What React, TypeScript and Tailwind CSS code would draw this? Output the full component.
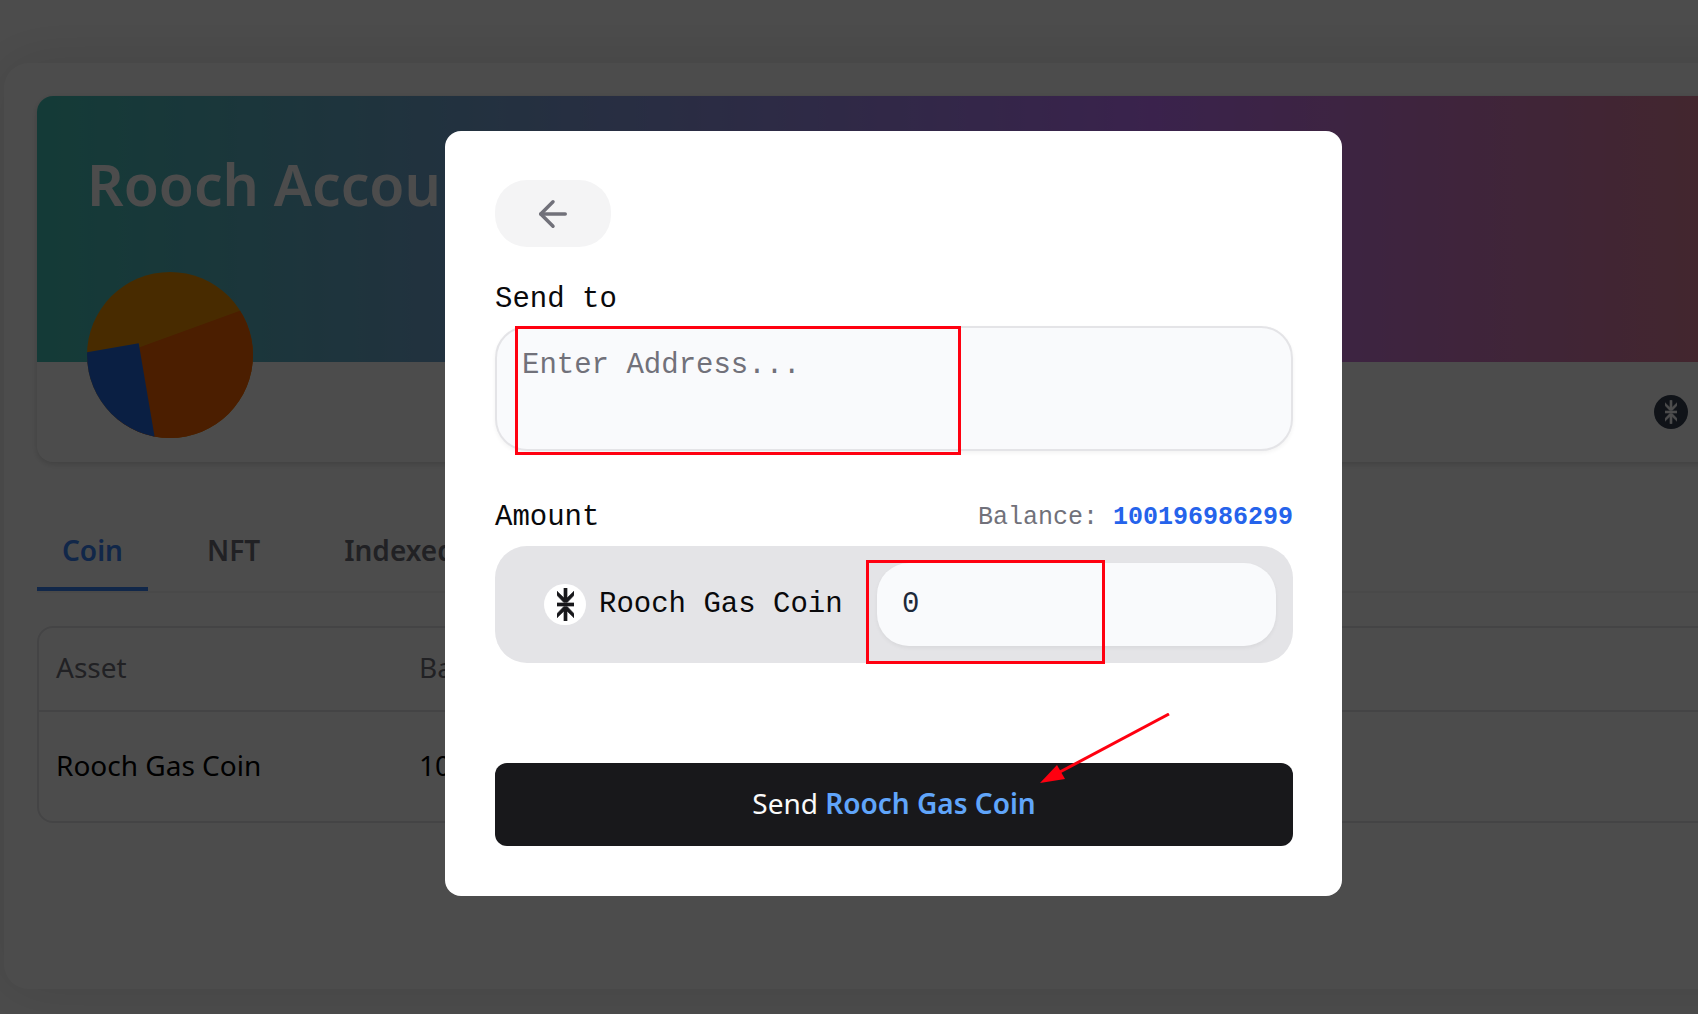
import React from "react";
import { ArrowLeft } from "lucide-react";

function CoinGlyph({ className }: { className: string }) {
  return (
    <svg viewBox="0 0 17 33" className={className} fill="currentColor" stroke="currentColor" strokeWidth="0.7" aria-hidden="true">
      <path d="M7 0h3v10l7-6.7v4L10.3 14.3H6.7L0 7.3v-4L7 10z" />
      <path d="M0 15h17v3H0z" />
      <path d="M7 33h3V23l7 6.7v-4L10.3 18.7H6.7L0 25.7v4L7 23z" />
    </svg>
  );
}

function Avatar() {
  return (
    <svg viewBox="0 0 166 166" className="size-[166px]" aria-hidden="true">
      <defs>
        <clipPath id="avatar-clip">
          <circle cx="83" cy="83" r="83" />
        </clipPath>
      </defs>
      <g clipPath="url(#avatar-clip)">
        <rect width="166" height="166" fill="#f19200" />
        <path d="M30 83.5 166 34v132H30z" fill="#fa6400" />
        <path d="M-5 81 51.7 71.3 68.5 170H-5z" fill="#236ae1" />
      </g>
    </svg>
  );
}

const tabs = ["Coin", "NFT", "Indexed"];

function AccountPage() {
  return (
    <main className="mt-[63px] ml-1 w-[135%] rounded-[25px] bg-white px-[33px] pt-[33px] pb-[166px] shadow-[0_0_60px_rgba(0,0,0,0.12)]">
      <section className="rounded-2xl bg-white shadow-[0_2px_6px_rgba(0,0,0,0.16)]">
        <div className="h-[266px] rounded-t-2xl bg-linear-to-r/srgb from-[#43c4b8] via-[#c274ff] to-[#fd8c35] px-[50px] pt-12">
          <h1 className="text-[57px] leading-[80px] font-semibold text-white">Rooch Account</h1>
        </div>
        <div className="flex h-[100px] items-start px-[50px]">
          <div className="-mt-[90px]">
            <Avatar />
          </div>
          <span className="mt-[33px] ml-[1401px] flex size-[34px] items-center justify-center rounded-full bg-gray-700 text-white">
            <CoinGlyph className="h-6 w-3" />
          </span>
        </div>
      </section>

      <nav className="mt-[58px] flex gap-[34px] border-b-2 border-gray-100" role="tablist">
        {tabs.map((tab, i) => (
          <button
            key={tab}
            role="tab"
            aria-selected={i === 0}
            className={
              i === 0
                ? "h-[71px] border-b-4 border-[#3b82f6] px-[25px] pb-2 text-[28px] leading-[40px] font-semibold text-[#3b82f6]"
                : "h-[71px] border-b-4 border-transparent px-[25px] pb-2 text-[28px] leading-[40px] font-semibold text-[#71717a]"
            }
          >
            {tab}
          </button>
        ))}
      </nav>

      <div className="mt-[33px] rounded-2xl border-2 border-zinc-200">
        <table className="w-full table-fixed text-left text-[28px] leading-[40px]">
          <thead>
            <tr className="h-[83px] border-b-2 border-zinc-200 text-[#71717a]">
              <th className="w-[363px] pb-1 pl-[17px] font-normal">Asset</th>
              <th className="pb-1 pl-[17px] font-normal">Balance</th>
            </tr>
          </thead>
          <tbody>
            <tr className="h-[110px] text-black">
              <td className="pb-1 pl-[17px]">Rooch Gas Coin</td>
              <td className="pb-1 pl-[17px]">100196986299</td>
            </tr>
          </tbody>
        </table>
      </div>
    </main>
  );
}

function SendDialog() {
  return (
    <div
      role="dialog"
      aria-modal="true"
      aria-label="Send coin"
      className="relative w-[897px] rounded-2xl bg-white py-[50px] pt-[49px] pr-[49px] pl-[50px] text-zinc-950"
    >
      <button
        aria-label="Back"
        className="flex h-[67px] w-[116px] items-center justify-center rounded-[32px] bg-[#f4f4f5] text-[#71717a]"
      >
        <ArrowLeft size={42} strokeWidth={2} />
      </button>

      <form className="mt-[33px] font-['Liberation_Mono',monospace] text-[29px] leading-[40px]" onSubmit={(e) => e.preventDefault()}>
        <label htmlFor="address" className="block">
          Send to
        </label>
        <div className="relative mt-[6px]">
          <textarea
            id="address"
            placeholder="Enter Address..."
            className="block h-[125px] w-full resize-none rounded-[32px] border-2 border-zinc-200 bg-[#f9fafc] px-[25px] py-[18px] shadow-[0_2px_4px_rgba(0,0,0,0.05)] outline-none placeholder:text-[#71717a]"
          />
          <div className="pointer-events-none absolute top-0 left-5 h-[129px] w-[446px] border-3 border-[#ff0010]" />
        </div>

        <div className="mt-[47px] flex items-center justify-between">
          <label htmlFor="amount">Amount</label>
          <p className="text-[25px] text-[#71717a]">
            Balance: <span className="font-bold text-[#2563eb]">100196986299</span>
          </p>
        </div>
        <div className="mt-2 flex h-[117px] items-center rounded-[32px] bg-zinc-200 pr-[17px] pl-[49px]">
          <span className="flex h-[41px] w-[42px] items-center justify-center rounded-full bg-white text-zinc-900">
            <CoinGlyph className="h-[33px] w-[17px]" />
          </span>
          <span className="ml-[13px] flex-1">Rooch Gas Coin</span>
          <div className="relative">
            <input
              id="amount"
              type="text"
              defaultValue="0"
              className="block h-[83px] w-[399px] rounded-[32px] bg-[#f9fafc] px-[25px] text-gray-800 shadow-[0_2px_4px_rgba(0,0,0,0.05)] outline-none"
            />
            <div className="pointer-events-none absolute -top-[3px] -left-[11px] h-[104px] w-[239px] border-3 border-[#ff0010]" />
          </div>
        </div>

        <div className="relative mt-[100px]">
          <button
            type="submit"
            className="h-[83px] w-full rounded-xl bg-zinc-900 pb-1 font-['Noto_Sans',sans-serif] text-[28px] text-zinc-50"
          >
            Send <span className="font-semibold text-[#60a5fa]">Rooch Gas Coin</span>
          </button>
          <svg
            viewBox="0 0 130 71"
            className="pointer-events-none absolute -top-[50px] left-[545px] h-[71px] w-[130px] text-[#ff0010]"
            aria-hidden="true"
          >
            <path d="M129 1 18 60" stroke="currentColor" strokeWidth="3" />
            <path d="M0 70 17 52 25 66z" fill="currentColor" />
          </svg>
        </div>
      </form>
    </div>
  );
}

export default function App() {
  return (
    <div className="relative flow-root h-screen overflow-hidden bg-white font-['Noto_Sans',sans-serif]">
      <AccountPage />
      <div className="absolute inset-0 flex items-start justify-center bg-black/70 pt-[131px] pl-[89px]">
        <SendDialog />
      </div>
    </div>
  );
}
